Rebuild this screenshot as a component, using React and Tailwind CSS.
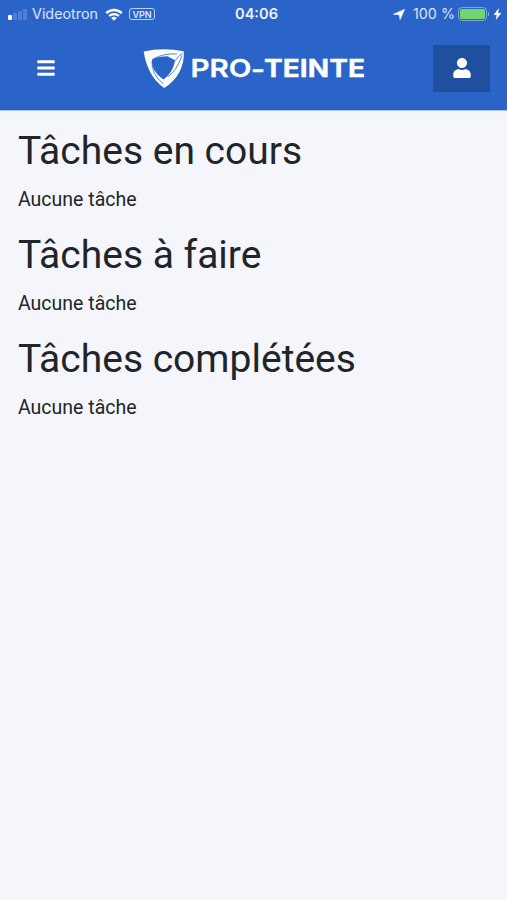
import { FaBars, FaUser } from 'react-icons/fa'

const SECTIONS = [
  { title: 'Tâches en cours', text: 'Aucune tâche' },
  { title: 'Tâches à faire', text: 'Aucune tâche' },
  { title: 'Tâches complétées', text: 'Aucune tâche' },
]

function WifiIcon() {
  return (
    <svg viewBox="0 0 18 13" className="ml-[6px] h-[13px] w-[18px]" fill="none" stroke="#fff">
      <path d="M1.2 5.1a11.2 11.2 0 0 1 15.6 0" strokeWidth="2.4" />
      <path d="M4.1 8a7.1 7.1 0 0 1 9.8 0" strokeWidth="2.2" />
      <path d="M9 12.8 6.2 10a4 4 0 0 1 5.6 0Z" fill="#fff" stroke="none" />
    </svg>
  )
}

function StatusBar() {
  return (
    <div className="grid h-7 grid-cols-[1fr_auto_1fr] items-center pr-[5px] pl-2 font-['Inter',sans-serif] text-[14px] text-[#dbe6fa]">
      <div className="flex items-center">
        <div className="mr-1 flex h-[11px] items-end gap-px">
          <span className="h-[5px] w-[4px] rounded-[1px] bg-white" />
          <span className="h-[7px] w-[4px] rounded-[1px] bg-[#4f80d6]" />
          <span className="h-[9px] w-[4px] rounded-[1px] bg-[#4f80d6]" />
          <span className="h-[11px] w-[4px] rounded-[1px] bg-[#4f80d6]" />
        </div>
        <svg className="h-5 w-[68px]">
          <text x="1" y="15" fontSize="14" fill="currentColor" textLength="66" lengthAdjust="spacingAndGlyphs">Videotron</text>
        </svg>
        <WifiIcon />
        <span className="ml-[6px] flex h-[12px] w-[26px] items-center justify-center rounded-[3px] border border-[#b9cef4] text-[9px] leading-none font-semibold">VPN</span>
      </div>
      <svg className="h-5 w-[47px] text-[#eef3fd]">
        <text x="3" y="15" fontSize="14" fontWeight="600" fill="currentColor" textLength="43" lengthAdjust="spacingAndGlyphs">04:06</text>
      </svg>
      <div className="flex items-center justify-end">
        <svg viewBox="0 0 12 11" className="mr-2 h-[11px] w-3" fill="#fff">
          <path d="M11.7.3 7 10.7 6.3 5.8.3 5.3Z" stroke="#fff" strokeWidth=".5" strokeLinejoin="round" />
        </svg>
        <svg className="h-5 w-[43px]">
          <text x="0" y="15" fontSize="14" fill="currentColor" textLength="42" lengthAdjust="spacingAndGlyphs">100 %</text>
        </svg>
        <span className="ml-[2px] h-[14px] w-[29px] rounded-[4px] border border-[#7fa7df] p-px">
          <span className="block h-full rounded-[2px] bg-[#70d76d]" />
        </span>
        <span className="ml-px h-1 w-[1.5px] rounded-r bg-[#8fb0e8]" />
        <svg viewBox="0 0 8 12" className="ml-1 h-3 w-[9px]" fill="#fff">
          <path d="M5.4 0 .1 6.9h3.1L2.2 12l5.7-7.1H4.7Z" />
        </svg>
      </div>
    </div>
  )
}

function Logo() {
  return (
    <svg viewBox="0 0 222 42" className="h-[42px] w-[222px]" role="img" aria-label="Pro-Teinte">
      <path fill="#fff" fillRule="evenodd" d="M.7 4.5Q20 .2 40.8 4.2Q41.8 27.5 21.2 41Q4.5 29.5.7 4.5ZM9 12.4C8.4 20 12 26.5 20.5 32.4Q30 26 32.2 13.2L24.5 9.2Q16 9.2 9 12.4Z" />
      <path fill="none" stroke="#2b64c9" strokeWidth=".8" d="M10 12Q21 6 34 7M39.6 6.4Q35.5 8.5 32.2 13.6M39 8.5Q33.5 24 25 29.6M9 14Q8 27 20.5 37" />
      <g fill="#fff" stroke="#fff" strokeWidth=".3" fontFamily="Inter, sans-serif" fontSize="24.5">
        <text x="47.5" y="29.8" fontWeight="600" textLength="61" lengthAdjust="spacingAndGlyphs">PRO</text>
        <text x="108" y="30.8" fontWeight="700" textLength="14" lengthAdjust="spacingAndGlyphs">-</text>
        <text x="121" y="29.8" fontWeight="700" textLength="101" lengthAdjust="spacingAndGlyphs">TEINTE</text>
      </g>
    </svg>
  )
}

export default function App() {
  return (
    <div className="min-h-screen bg-[#f4f6fb] font-['Roboto',sans-serif] text-[#212529]">
      <header className="h-[111px] border-b border-[#a9c0e9] bg-[#2b64c9]">
        <StatusBar />
        <div className="flex h-20 items-center pr-[17px] pl-[37px]">
          <button className="mr-[49px] flex w-[57px] text-white" aria-label="Menu">
            <FaBars size={20} className="w-[18px]" />
          </button>
          <Logo />
          <button className="ml-auto flex h-[47px] w-[57px] items-center justify-center bg-[#204f9f] text-white" aria-label="Profil">
            <FaUser size={20} />
          </button>
        </div>
      </header>
      <main className="px-[18px] pt-4">
        {SECTIONS.map(({ title, text }) => (
          <section key={title} className="mb-4">
            <h1 className="mb-2.5 text-[39px] leading-[48px]">{title}</h1>
            <p className="text-[19.5px] leading-[30px]">{text}</p>
          </section>
        ))}
      </main>
    </div>
  )
}
